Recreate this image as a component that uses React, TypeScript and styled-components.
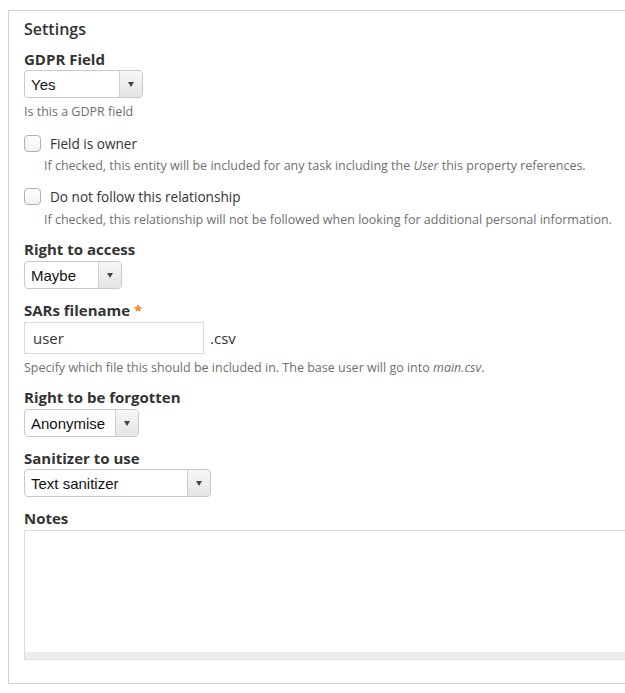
import React from "react";
import styled, { createGlobalStyle } from "styled-components";

const Global = createGlobalStyle`
  html, body { margin: 0; padding: 0; background: #fff; overflow: hidden; }
  body { font-family: "Open Sans", "Liberation Sans", sans-serif; color: #333; }
`;

const Page = styled.div`
  padding: 10px 0 0 8px;
`;

const Panel = styled.section`
  width: 660px;
  height: 674px;
  box-sizing: border-box;
  border: 1px solid #cfcfcf;
  padding: 7px 0 0 15px;
  display: flex;
  flex-direction: column;
`;

const Heading = styled.h2`
  margin: 0 0 9px;
  font-size: 16px;
  line-height: 22px;
  font-weight: 600;
  color: #333;
`;

const Field = styled.div<{ $top?: number; $bottom?: number }>`
  display: flex;
  flex-direction: column;
  align-items: flex-start;
  margin-top: ${(p) => p.$top ?? 0}px;
  margin-bottom: ${(p) => p.$bottom ?? 11}px;
`;

const Label = styled.label`
  font-size: 15px;
  line-height: 20px;
  font-weight: 700;
  color: #333;
  margin-bottom: 2px;
`;

const Required = styled.span`
  color: #f0811b;
`;

const Help = styled.div<{ $indent?: number; $top?: number }>`
  font-size: 12.5px;
  line-height: 18px;
  color: #6f6f6f;
  margin-top: ${(p) => p.$top ?? 5}px;
  padding-left: ${(p) => p.$indent ?? 0}px;
  white-space: nowrap;
  em { font-style: italic; }
`;

const SelectBox = styled.div<{ $w: number }>`
  width: ${(p) => p.$w}px;
  height: 28px;
  box-sizing: border-box;
  border: 1px solid #c9c9c9;
  border-radius: 4px;
  display: flex;
  align-items: stretch;
  overflow: hidden;
  background: #fff;
`;

const SelectValue = styled.span`
  flex: 1;
  display: flex;
  align-items: center;
  padding-left: 6px;
  font-family: "Liberation Sans", Arial, sans-serif;
  font-size: 15px;
  color: #111;
`;

const SelectArrow = styled.span`
  width: 22px;
  border-left: 1px solid #cfcfcf;
  background: linear-gradient(#f7f7f7, #e4e4e4);
  display: flex;
  align-items: center;
  justify-content: center;
  &::after {
    content: "";
    border-left: 3.5px solid transparent;
    border-right: 3.5px solid transparent;
    border-top: 5px solid #444;
  }
`;

const Select = ({ value, width }: { value: string; width: number }) => (
  <SelectBox $w={width}>
    <SelectValue>{value}</SelectValue>
    <SelectArrow />
  </SelectBox>
);

const CheckGroup = styled.div<{ $top: number }>`
  display: flex;
  flex-direction: column;
  margin-top: ${(p) => p.$top}px;
`;

const CheckRow = styled.div`
  display: flex;
  align-items: center;
  gap: 9px;
  height: 18px;
`;

const CheckBox = styled.span`
  width: 17px;
  height: 17px;
  box-sizing: border-box;
  border: 1px solid #b0b0b0;
  border-radius: 4px;
  background: linear-gradient(#fff, #f2f2f2);
`;

const CheckText = styled.span`
  font-size: 13.6px;
  color: #333;
`;

const InputRow = styled.div`
  display: flex;
  align-items: center;
  gap: 6px;
`;

const TextInput = styled.div`
  width: 180px;
  height: 32px;
  box-sizing: border-box;
  border: 1px solid #dadada;
  padding-left: 8px;
  display: flex;
  align-items: center;
  font-size: 15px;
  color: #333;
`;

const Suffix = styled.span`
  font-size: 15px;
  color: #333;
`;

const TextArea = styled.div`
  width: 640px;
  height: 130px;
  box-sizing: border-box;
  border: 1px solid #dcdcdc;
  display: flex;
  flex-direction: column;
  justify-content: flex-end;
`;

const ScrollBar = styled.div`
  height: 7px;
  background: #ededed;
`;

export default function App() {
  return (
    <>
      <Global />
      <Page>
        <Panel>
          <Heading>Settings</Heading>
          <Field $bottom={0}>
            <Label style={{ marginBottom: 1 }}>GDPR Field</Label>
            <Select value="Yes" width={119} />
            <Help>Is this a GDPR field</Help>
          </Field>

          <CheckGroup $top={13}>
            <CheckRow>
              <CheckBox />
              <CheckText>Field is owner</CheckText>
            </CheckRow>
            <Help $indent={20} $top={5}>
              If checked, this entity will be included for any task including the <em>User</em> this property references.
            </Help>
          </CheckGroup>

          <CheckGroup $top={12}>
            <CheckRow>
              <CheckBox />
              <CheckText>Do not follow this relationship</CheckText>
            </CheckRow>
            <Help $indent={20} $top={6}>
              If checked, this relationship will not be followed when looking for additional personal information.
            </Help>
          </CheckGroup>

          <Field $top={10}>
            <Label>Right to access</Label>
            <Select value="Maybe" width={98} />
          </Field>

          <Field $bottom={10}>
            <Label>
              SARs filename <Required>*</Required>
            </Label>
            <InputRow>
              <TextInput>user</TextInput>
              <Suffix>.csv</Suffix>
            </InputRow>
            <Help>
              Specify which file this should be included in. The base user will go into <em>main.csv</em>.
            </Help>
          </Field>

          <Field>
            <Label>Right to be forgotten</Label>
            <Select value="Anonymise" width={115} />
          </Field>

          <Field>
            <Label style={{ marginBottom: 1 }}>Sanitizer to use</Label>
            <Select value="Text sanitizer" width={187} />
          </Field>

          <Field>
            <Label>Notes</Label>
            <TextArea>
              <ScrollBar />
            </TextArea>
          </Field>
        </Panel>
      </Page>
    </>
  );
}
